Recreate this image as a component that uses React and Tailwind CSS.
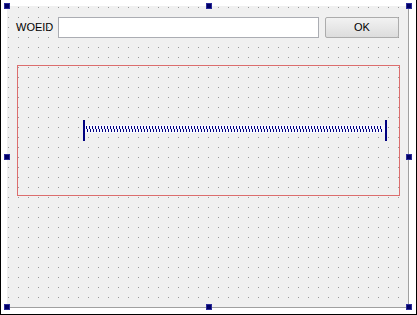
import React from "react";

function Handle({ className }) {
  return (
    <div
      className={
        "absolute w-[6px] h-[6px] bg-[#000066] border border-[#2a2a9a] " +
        className
      }
    />
  );
}

function Spacer() {
  const rects = [];
  for (let x = 3; x < 300; x += 3) {
    rects.push(<rect key={"t" + x} x={x} y="6" width="1" height="3" fill="#000080" />);
    rects.push(<rect key={"b" + x} x={x + 1} y="9" width="1" height="3" fill="#000080" />);
  }
  return (
    <svg width="304" height="21" viewBox="0 0 304 21" className="block" shapeRendering="crispEdges">
      <rect x="2" y="5" width="300" height="8" fill="#f7f7ff" />
      <rect x="0" y="0" width="2" height="21" fill="#000080" />
      <rect x="302" y="0" width="2" height="21" fill="#000080" />
      {rects}
    </svg>
  );
}

export default function App() {
  return (
    <div
      className="relative w-[417px] h-[315px] bg-white border-x border-b border-black pl-[6px] pt-[6px] text-black"
      style={{ fontFamily: '"Liberation Sans", Arial, sans-serif' }}
    >
      <div className="w-[402px] h-[302px] border-r border-b border-[#a0a0a0] bg-[#f0f0f0] bg-[image:conic-gradient(from_270deg_at_1px_1px,#9a9a9a_90deg,transparent_0)] bg-[length:10px_10px] bg-[position:1px_1px] pl-[9px] pt-[11px]">
        <div className="flex items-center">
          <div className="w-[42px] text-[11px] leading-none">WOEID</div>
          <div className="w-[261px] h-[21px] border border-[#abadb3] bg-white" />
          <button className="ml-[6px] w-[74px] h-[21px] border border-[#acacac] rounded-[2px] bg-gradient-to-b from-[#f2f2f2] to-[#dddddd] text-[11px] leading-none flex items-center justify-center">
            OK
          </button>
        </div>
        <div className="mt-[27px] ml-[1px] w-[383px] h-[131px] border border-[#dc6e6e] flex items-center pl-[65px]">
          <Spacer />
        </div>
      </div>

      <Handle className="left-[3px] top-[3px]" />
      <Handle className="left-[205px] top-[3px]" />
      <Handle className="left-[405px] top-[3px]" />
      <Handle className="left-[3px] top-[154px]" />
      <Handle className="left-[405px] top-[154px]" />
      <Handle className="left-[3px] top-[304px]" />
      <Handle className="left-[205px] top-[304px]" />
      <Handle className="left-[405px] top-[304px]" />
    </div>
  );
}
